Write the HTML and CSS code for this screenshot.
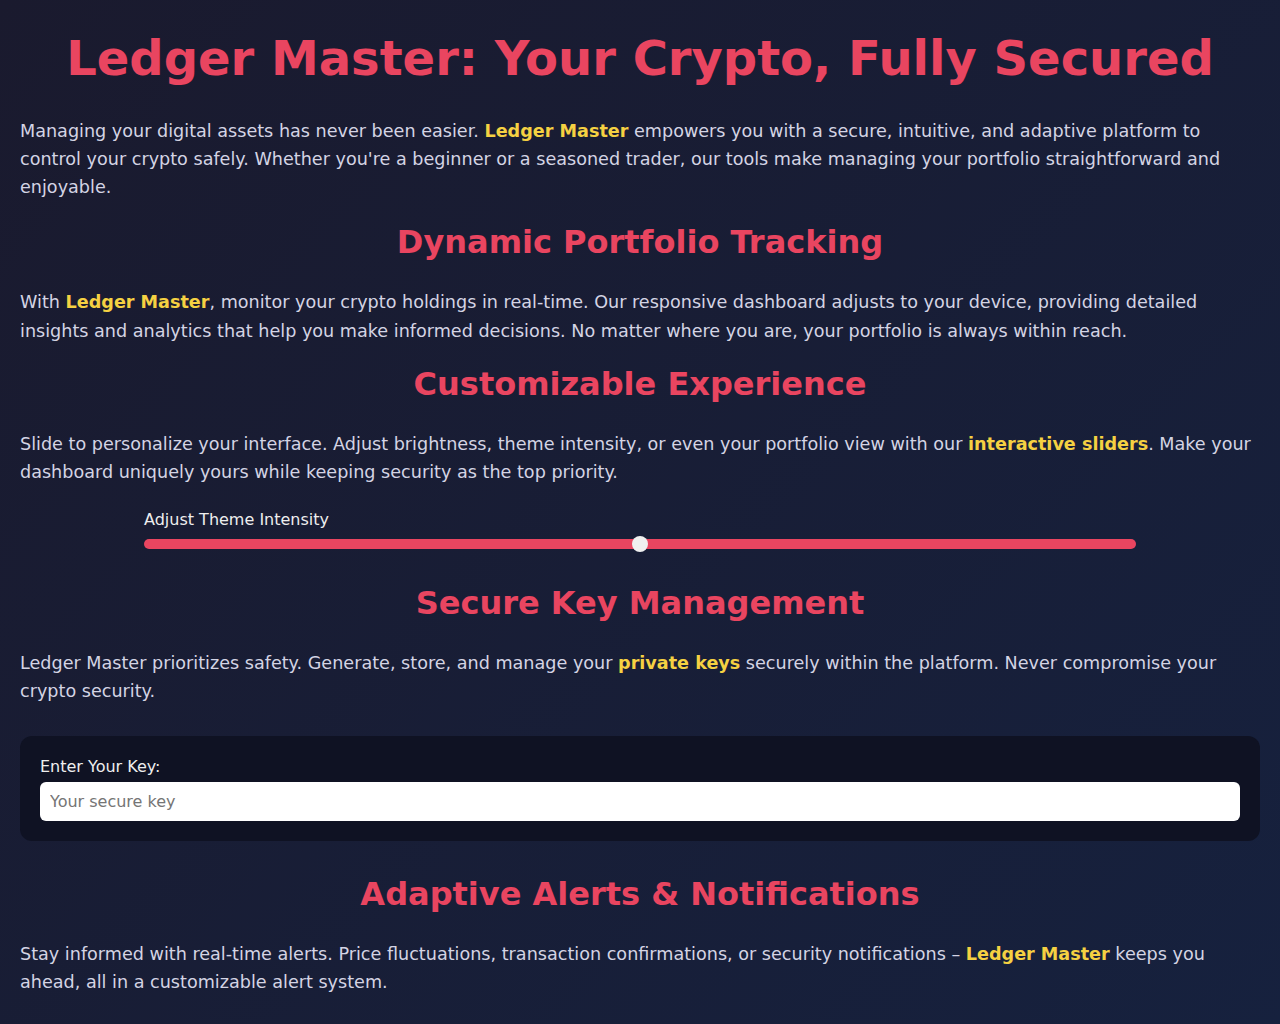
FILE: index.html
```html
<!DOCTYPE html>
<html lang="en">
<head>
  <meta charset="UTF-8" />
  <meta name="viewport" content="width=device-width, initial-scale=1.0"/>
  <title>Ledger Master</title>
  <link rel="stylesheet" href="styles.css">
</head>
<body>

  <h1>Ledger Master: Your Crypto, Fully Secured</h1>

  <p>Managing your digital assets has never been easier. <strong>Ledger Master</strong> empowers you with a secure, intuitive, and adaptive platform to control your crypto safely. Whether you're a beginner or a seasoned trader, our tools make managing your portfolio straightforward and enjoyable.</p>

  <h2 class="first">Dynamic Portfolio Tracking</h2>
  <p>With <strong>Ledger Master</strong>, monitor your crypto holdings in real-time. Our responsive dashboard adjusts to your device, providing detailed insights and analytics that help you make informed decisions. No matter where you are, your portfolio is always within reach.</p>

  <h2>Customizable Experience</h2>
  <p>Slide to personalize your interface. Adjust brightness, theme intensity, or even your portfolio view with our <strong>interactive sliders</strong>. Make your dashboard uniquely yours while keeping security as the top priority.</p>

  <div class="slider-box">
    <label for="themeSlider">Adjust Theme Intensity</label>
    <input type="range" id="themeSlider" min="0" max="100" value="50" />
  </div>

  <h2>Secure Key Management</h2>
  <p>Ledger Master prioritizes safety. Generate, store, and manage your <strong>private keys</strong> securely within the platform. Never compromise your crypto security.</p>

  <div class="key-box">
    <label for="keyInput">Enter Your Key:</label>
    <input type="text" id="keyInput" placeholder="Your secure key" />
  </div>

  <h2>Adaptive Alerts &amp; Notifications</h2>
  <p>Stay informed with real-time alerts. Price fluctuations, transaction confirmations, or security notifications – <strong>Ledger Master</strong> keeps you ahead, all in a customizable alert system.</p>

</body>
</html>
```

FILE: styles.css
```css
* {
  box-sizing: border-box;
}

body {
  font-family: 'DejaVu Sans', sans-serif;
  background: linear-gradient(135deg, #1a1a2e, #16213e);
  color: #d4d4e4;
  margin: 0;
  padding: 20px;
  min-height: 100vh;
}

h1 {
  font-size: 48px;
  text-align: center;
  color: #e94560;
  margin: 10px 0 31px;
}

h2 {
  font-size: 32px;
  text-align: center;
  color: #e94560;
  margin: 20px 0 27px;
}

h2.first {
  margin-top: 22px;
}

p {
  font-size: 17.6px;
  line-height: 1.6;
  margin: 0 0 20px;
}

strong {
  color: #f5d142;
}

.slider-box {
  width: 80%;
  margin: 24px auto 35px;
  display: flex;
  flex-direction: column;
  gap: 10px;
}

.slider-box label {
  font-size: 16px;
  color: #eee;
}

.slider-box input[type="range"] {
  -webkit-appearance: none;
  appearance: none;
  width: 100%;
  height: 10px;
  margin: 0;
  border-radius: 5px;
  background: #e94560;
  outline: none;
}

.slider-box input[type="range"]::-webkit-slider-thumb {
  -webkit-appearance: none;
  appearance: none;
  width: 16px;
  height: 16px;
  border-radius: 50%;
  background: #f0f0f0;
  cursor: pointer;
}

.key-box {
  background: #0f1223;
  padding: 20px;
  border-radius: 12px;
  margin: 31px 0 34px;
}

.key-box label {
  display: block;
  font-size: 16px;
  line-height: 1.4;
  color: #eee;
  margin-bottom: 3px;
}

.key-box input {
  width: 100%;
  padding: 10px;
  border: none;
  border-radius: 6px;
  font-family: 'DejaVu Sans', sans-serif;
  font-size: 16px;
  background: #fff;
  color: #333;
}
```
